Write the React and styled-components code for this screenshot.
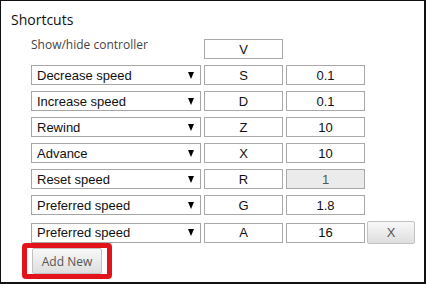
import React from 'react'
import styled, { createGlobalStyle } from 'styled-components'

const GlobalStyle = createGlobalStyle`
  html, body {
    margin: 0;
    padding: 0;
    background: #fff;
  }
`

const Frame = styled.section`
  box-sizing: border-box;
  width: 426px;
  height: 284px;
  border: 1px solid #111;
  border-right-width: 2px;
  border-bottom-width: 2px;
  padding: 9px 0 0 10px;
  background: #fff;
`

const Title = styled.h3`
  margin: 0;
  font-family: 'Open Sans', 'Noto Sans', sans-serif;
  font-size: 14px;
  font-weight: 400;
  line-height: 19px;
  color: #111;
`

const Rows = styled.div`
  display: flex;
  flex-direction: column;
  gap: 6px;
  margin: 10px 0 0 20px;
`

const Row = styled.div`
  display: flex;
  align-items: center;
  gap: 3px;
`

const Label = styled.span`
  align-self: flex-start;
  width: 170px;
  font-family: 'Open Sans', 'Noto Sans', sans-serif;
  font-size: 12px;
  line-height: 12px;
  color: #444;
`

const SelectBox = styled.div`
  box-sizing: border-box;
  display: flex;
  align-items: center;
  justify-content: space-between;
  width: 170px;
  height: 20px;
  padding: 0 6px 0 5px;
  border: 1px solid #a6a6a6;
  font-family: 'Liberation Sans', Arial, sans-serif;
  font-size: 13px;
  color: #111;
  background: #fff;
`

const Arrow = styled.i`
  width: 0;
  height: 0;
  border-left: 3px solid transparent;
  border-right: 3px solid transparent;
  border-top: 7px solid #000;
`

const Field = styled.input`
  box-sizing: border-box;
  width: 79px;
  height: 20px;
  margin: 0;
  padding: 0;
  border: 1px solid #a9a9a9;
  outline: none;
  text-align: center;
  font-family: 'Liberation Sans', Arial, sans-serif;
  font-size: 13px;
  color: ${p => (p.$locked ? '#555' : '#111')};
  background: ${p => (p.$locked ? '#ebebeb' : '#fff')};
`

const Button = styled.button`
  box-sizing: border-box;
  width: ${p => p.$w}px;
  height: ${p => p.$h}px;
  margin: 0;
  padding: 0;
  border: 1px solid #c2c2c2;
  border-radius: 2px;
  background: linear-gradient(#f8f8f8, #dedede);
  font-family: ${p => p.$sans ? "'Liberation Sans', Arial, sans-serif" : "'Open Sans', 'Noto Sans', sans-serif"};
  font-size: ${p => (p.$sans ? 13 : 12)}px;
  color: #555;
`

const RemoveButton = styled(Button)`
  margin-left: -1px;
`

const Highlight = styled.div`
  align-self: flex-start;
  margin: -7px 0 0 -9px;
  padding: 0 5px;
  border: 5px solid #e3131b;
  border-radius: 4px;
  display: flex;
`

const shortcuts = [
  { action: 'Decrease speed', key: 'S', value: '0.1' },
  { action: 'Increase speed', key: 'D', value: '0.1' },
  { action: 'Rewind', key: 'Z', value: '10' },
  { action: 'Advance', key: 'X', value: '10' },
  { action: 'Reset speed', key: 'R', value: '1', locked: true },
  { action: 'Preferred speed', key: 'G', value: '1.8' },
  { action: 'Preferred speed', key: 'A', value: '16', removable: true }
]

const App = () => (
  <>
    <GlobalStyle />
    <Frame>
      <Title>Shortcuts</Title>
      <Rows>
        <Row>
          <Label>Show/hide controller</Label>
          <Field readOnly value="V" />
        </Row>
        {shortcuts.map((s, i) => (
          <Row key={i}>
            <SelectBox>
              <span>{s.action}</span>
              <Arrow />
            </SelectBox>
            <Field readOnly value={s.key} />
            <Field readOnly value={s.value} $locked={s.locked} />
            {s.removable && <RemoveButton $w={48} $h={23} $sans>X</RemoveButton>}
          </Row>
        ))}
        <Highlight>
          <Button $w={70} $h={26}>Add New</Button>
        </Highlight>
      </Rows>
    </Frame>
  </>
)

export default App
